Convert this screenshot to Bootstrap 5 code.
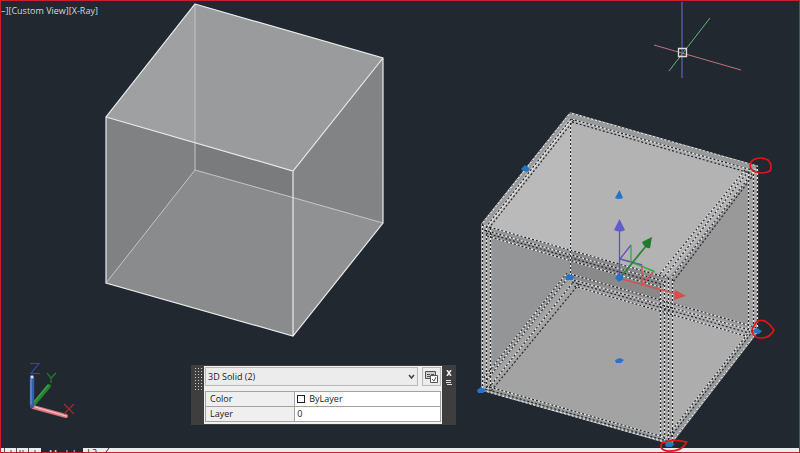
<!DOCTYPE html>
<html lang="en">
<head>
<meta charset="utf-8">
<meta name="viewport" content="width=device-width, initial-scale=1">
<title>Custom View</title>
<link href="https://cdn.jsdelivr.net/npm/bootstrap@5.3.0/dist/css/bootstrap.min.css" rel="stylesheet">
<style>
body{background:#212830;font-family:"Open Sans","Noto Sans",sans-serif;font-size:9px;line-height:12px;color:#1a1a1a}
.app-frame{border:1px solid #c8202a;background:#212830}
.scene-art{position:absolute;inset:-1px 0 0 -1px;width:calc(100% + 2px);height:auto}
.view-label{position:relative;color:#d5d9dc;white-space:nowrap;padding:4px 0 0}
.view-label button{border:0;background:none;padding:0;color:inherit}
.palette{position:absolute;left:190px;bottom:23px;width:265px;background:#3e3e3e;padding:1px 0}
.palette-grip{flex:0 0 13px;padding:2px 0 0 4px}
.palette-body{background:#f0f0f0;padding:1px 1px 2px;min-width:0}
.palette-side{flex:0 0 14px;color:#e8e8e8}
.palette-side button{border:0;background:none;padding:0;line-height:0}
.palette select{font-size:9px;line-height:12px;min-width:0;height:19px;border:1px solid #b8b8b8;border-radius:0;background-color:#ececec;padding:0 16px 0 2px;color:#222;background-image:none}
.select-wrap{position:relative;min-width:0}
.select-wrap svg{position:absolute;right:3px;top:7px;pointer-events:none}
.quick-btn{flex:0 0 19px;height:19px;border:1px solid #b8b8b8;background:#ececec;padding:0;line-height:0}
.prop-table{width:100%;margin-top:5px;border-collapse:collapse;table-layout:fixed;background:#fff}
.prop-table th,.prop-table td{border:1px solid #a2a2a2;font-weight:400;padding:1px 2px;height:15px}
.prop-table th{width:38%;background:#efefef;padding-left:4px}
.swatch{width:8px;height:8px;border:1px solid #222;background:#fff}
.tab-strip{height:4px;background:#ececec;overflow:hidden}
.tab-strip a{color:#222;text-decoration:none;line-height:10px}
.tab-strip svg{flex:none}
.tab-on{background:#212830;padding:0 8px}
.tab-strip .tab-on a{color:#ddd}
</style>
<script src="https://cdn.jsdelivr.net/npm/bootstrap@5.3.0/dist/js/bootstrap.bundle.min.js"></script>
</head>
<body>
<div class="app-frame d-flex flex-column vh-100 overflow-hidden">
<main class="position-relative flex-grow-1 overflow-hidden">
<svg class="scene-art" viewBox="0 0 800 453" aria-hidden="true">
<defs><clipPath id="solid"><path d="M570 112 759 166V331L671 445 481 391V224Z"/></clipPath></defs>
<!-- plain solid -->
<path fill="#8a8b8c" d="M195 4 383 58V223L293 336 106 283V117Z"/>
<path fill="#9a9b9c" d="M195 4 383 58 293 171 106 117Z"/>
<path fill="#9fa0a1" d="M195 4V143L106 117Z"/>
<path fill="#808182" d="M106 117 195 143V170L106 283Z"/>
<path fill="#7a7b7c" d="M195 143 293 171V197L195 170Z"/>
<path fill="#828384" d="M293 171 383 58V223L293 197Z"/>
<path fill="#909192" d="M293 197 383 223 293 336Z"/>
<path fill="none" stroke="#c4c5c6" stroke-width="1" d="M195 4V170L383 223M195 170 106 283"/>
<path fill="none" stroke="#e9eaeb" stroke-width="1.2" d="M195 4 383 58V223L293 336 106 283V117ZM106 117 293 171 383 58M293 171V336"/>
<!-- selected solid -->
<path fill="#a3a3a4" d="M570 113 758 166V331L671 444 481 390V224Z"/>
<path fill="#b3b3b4" d="M570 113 758 166 669 277 482 226Z"/>
<path fill="#bababb" d="M570 113V250L482 226Z"/>
<path fill="#949596" d="M482 226 570 250V278L481 390Z"/>
<path fill="#89898a" d="M570 250 669 277V304L570 278Z"/>
<path fill="#99999a" d="M669 277 758 166V331L669 305Z"/>
<path fill="#adadae" d="M669 305 758 331 669 444Z"/>
<g clip-path="url(#solid)" fill="none">
<g stroke="#98999b" stroke-width="6"><path d="M570 115 757 168M569 114 483 224M484 388 669 441M757 331 670 442"/></g>
<g stroke="#a2a2a3" stroke-width="10"><path d="M487 226V388M753 168V331M666 279V440"/></g>
<g stroke="#ececec" stroke-width="1.200"><path d="M570 113 758 166M571 119 752 170M570 113 482 224M572 119 487 227M482.500 224V390M486.500 226V389M490.500 228V387M748.500 172V329M753.500 170V331M757.500 167V332M482 225 668 278M484 230 666 282M487 236 660 287M757 167 671 278M751 168 665 276M745 170 660 274M660.500 286V439M664.500 281V440M668.500 278V442M672.500 279V440M570 274 758 328M570 279 757 332M574 286 746 336M570 275 482 386M575 280 487 390M567 273 483 379M481 390 669 443M486 386 667 438M758 331 671 443M750 331 666 438"/></g>
<g stroke="#23272c" stroke-width="1.200" stroke-dasharray="2 2"><path d="M571 119 752 170M572 122 750 173M571 119 486 227M574 120 489 228M482.500 224V390M486.500 226V389M490.500 228V387M748.500 172V329M753.500 170V331M757.500 167V332M482 225 668 278M484 230 666 282M486 233 664 285M487 236 660 287M757 167 671 278M751 168 665 276M745 170 660 274M754 174 673 282M660.500 286V439M664.500 281V440M668.500 278V442M672.500 279V440M570 274 758 328M570 279 757 332M572 282 749 333M574 286 746 336M570 275 482 386M575 280 487 390M579 284 491 391M567 273 483 379M486 386 667 438M485 389 667 441M750 331 666 438M753 331 668 440"/></g>
<g stroke="#55585c" stroke-dasharray="2 2"><path d="M570 113 758 166M570 113 482 224M481 390 669 443M758 331 671 443"/></g>
<path stroke="#e8e8e8" d="M570.500 123V277"/><path stroke="#2b2e32" stroke-dasharray="2 2" d="M570.500 123V277"/>
</g>
<!-- move gizmo -->
<g fill="none" stroke-width="1.3">
<path stroke="#5b52bd" d="M619.500 278V228M620 259 631 245M620 259 642 265"/>
<path stroke="#2fae3c" d="M631 245V262L655 272M631 262 654 271"/>
<path stroke="#2b8435" stroke-width="1.8" d="M620 278 646 246"/>
<path stroke="#d55252" d="M622 279 680 295M642 265V285L653 272"/>
</g>
<path fill="#615bcb" d="M619.500 219 625 230Q620 233 614 230Z"/>
<path fill="#217a2b" d="M652 237 650 248Q645 249 642 242Z"/>
<path fill="#d94c4c" d="M675 290 686 296 674 300Z"/>
<g fill="#2474c7">
<path d="M619.500 190 623 198Q619 200 615 198Z"/>
<path d="M615 278 618 274 623 275 623 279 619 282Z"/>
<path d="M615 360 620 358 624 360 621 363 616 363Z"/>
<path d="M521 169 525 165 530 169 528 172 523 171Z"/>
<path d="M565 277 569 274 574 276 573 280 567 280Z"/>
<path d="M477 390 481 387 486 390 483 393 478 393Z"/>
<path d="M753 330 757 328 762 331 759 334 754 333Z"/>
<path d="M665 444 669 442 674 444 671 447 666 447Z"/>
</g>
<g fill="none" stroke="#df1518" stroke-width="1.7" stroke-linejoin="round">
<path d="M753 160Q760 156 768 160 773 165 770 171 762 175 753 171 747 165 753 160Z"/>
<path d="M756 322Q763 318 769 324L774 330Q770 338 761 338 753 338 752 331 753 325 758 321"/>
</g>
<!-- crosshair -->
<path stroke="#5656a5" stroke-width="1.5" d="M682 2V78"/>
<path stroke="#66b676" d="M669 71 710 18"/>
<path stroke="#bd747d" d="M654 45 741 70"/>
<path fill="none" stroke="#ddd" stroke-width="1.3" d="M678.500 48.500h8v8h-8z"/>
<!-- axis icon -->
<g stroke-linecap="round" fill="none">
<path stroke="#24832c" stroke-width="4" d="M34 404 49 386"/>
<path stroke="#3fa247" stroke-width="1.200" d="M34 402 48 385"/>
<path stroke="#d9777c" stroke-width="4" d="M33 407 66 416"/>
<path stroke="#f6c9cb" stroke-width="1.300" d="M35 407 66 416"/>
<path stroke="#355eaa" stroke-width="4.400" d="M32 377V406"/>
<path stroke="#6f92d2" stroke-width="1.200" d="M31 379V404"/>
</g>
<circle cx="32" cy="377" r="1.500" fill="#d8e4f7"/>
<g fill="none" stroke-width="1.200">
<path stroke="#2450a5" d="M30 363.500H39L31 373.500H40"/>
<path stroke="#24802e" d="M47 373 51 378 56 373M51 378V383"/>
<path stroke="#a9262f" d="M64 404 74 414M74 404 64 414"/>
</g>
</svg>
<div class="view-label d-flex"><button type="button">–]</button><button type="button">[Custom View]</button><button type="button">[X-Ray]</button></div>
<section class="palette d-flex" aria-label="Quick Properties">
<div class="palette-grip"><svg width="7" height="22" class="d-block"><path stroke="#c9c9c9" stroke-width="1" stroke-dasharray="1 2" d="M.5 0V22M3.500 0V22M6.500 0V22"/></svg></div>
<div class="palette-body flex-grow-1">
<div class="d-flex gap-1">
<div class="select-wrap flex-grow-1"><select class="form-select" aria-label="Object type"><option>3D Solid (2)</option></select><svg width="7" height="6" fill="none" stroke="#444" stroke-width="1.500"><path d="M1 1 3.500 4 6 1"/></svg></div>
<button type="button" class="quick-btn" aria-label="Customize"><svg width="15" height="15" fill="none" stroke="#555"><path fill="#ccc" d="M1.500 2.500h10v7h-10z"/><path d="M3 5.500h3M3 7.500h3M7 5.500h3"/><path fill="#fff" d="M6.500 6.500h7v7h-7z"/><path d="M8 10 10 12 12 8"/></svg></button>
</div>
<table class="prop-table"><tbody>
<tr><th scope="row">Color</th><td><div class="d-flex align-items-center gap-1"><span class="swatch"></span><span>ByLayer</span></div></td></tr>
<tr><th scope="row">Layer</th><td>0</td></tr>
</tbody></table>
</div>
<div class="palette-side d-flex flex-column align-items-center pt-1 gap-1">
<button type="button" aria-label="Close"><svg width="6" height="6" stroke="#eee" stroke-width="1.500"><path d="M1 0 5 6M5 0 1 6"/></svg></button>
<button type="button" aria-label="Options"><svg width="6" height="6" stroke="#ddd"><path d="M0 .5H5M0 2.500H5M1 4.500H6"/></svg></button>
</div>
</section>
</main>
<nav class="tab-strip d-flex flex-shrink-0" aria-label="Layouts">
<svg width="40" height="4" stroke="#555"><path d="M3.500 0V4M15.500 0V4M27.500 0V4M10 2V4M19 2V4M22 2V4M34 2V4"/></svg>
<div class="tab-on"><a href="#">Model</a></div>
<a class="px-1" href="#">L2</a>
<svg width="12" height="4" stroke="#333"><path d="M5 4 8 0"/></svg>
</nav>
<svg class="scene-art" viewBox="0 0 800 453" style="pointer-events:none" aria-hidden="true"><path fill="none" stroke="#df1518" stroke-width="1.700" d="M661 443Q672 438 686 442 682 451 668 451 658 450 661 443Z"/><path fill="#2474c7" d="M665 444 669 442 674 444 671 447 666 447Z"/></svg>
</div>
</body>
</html>
